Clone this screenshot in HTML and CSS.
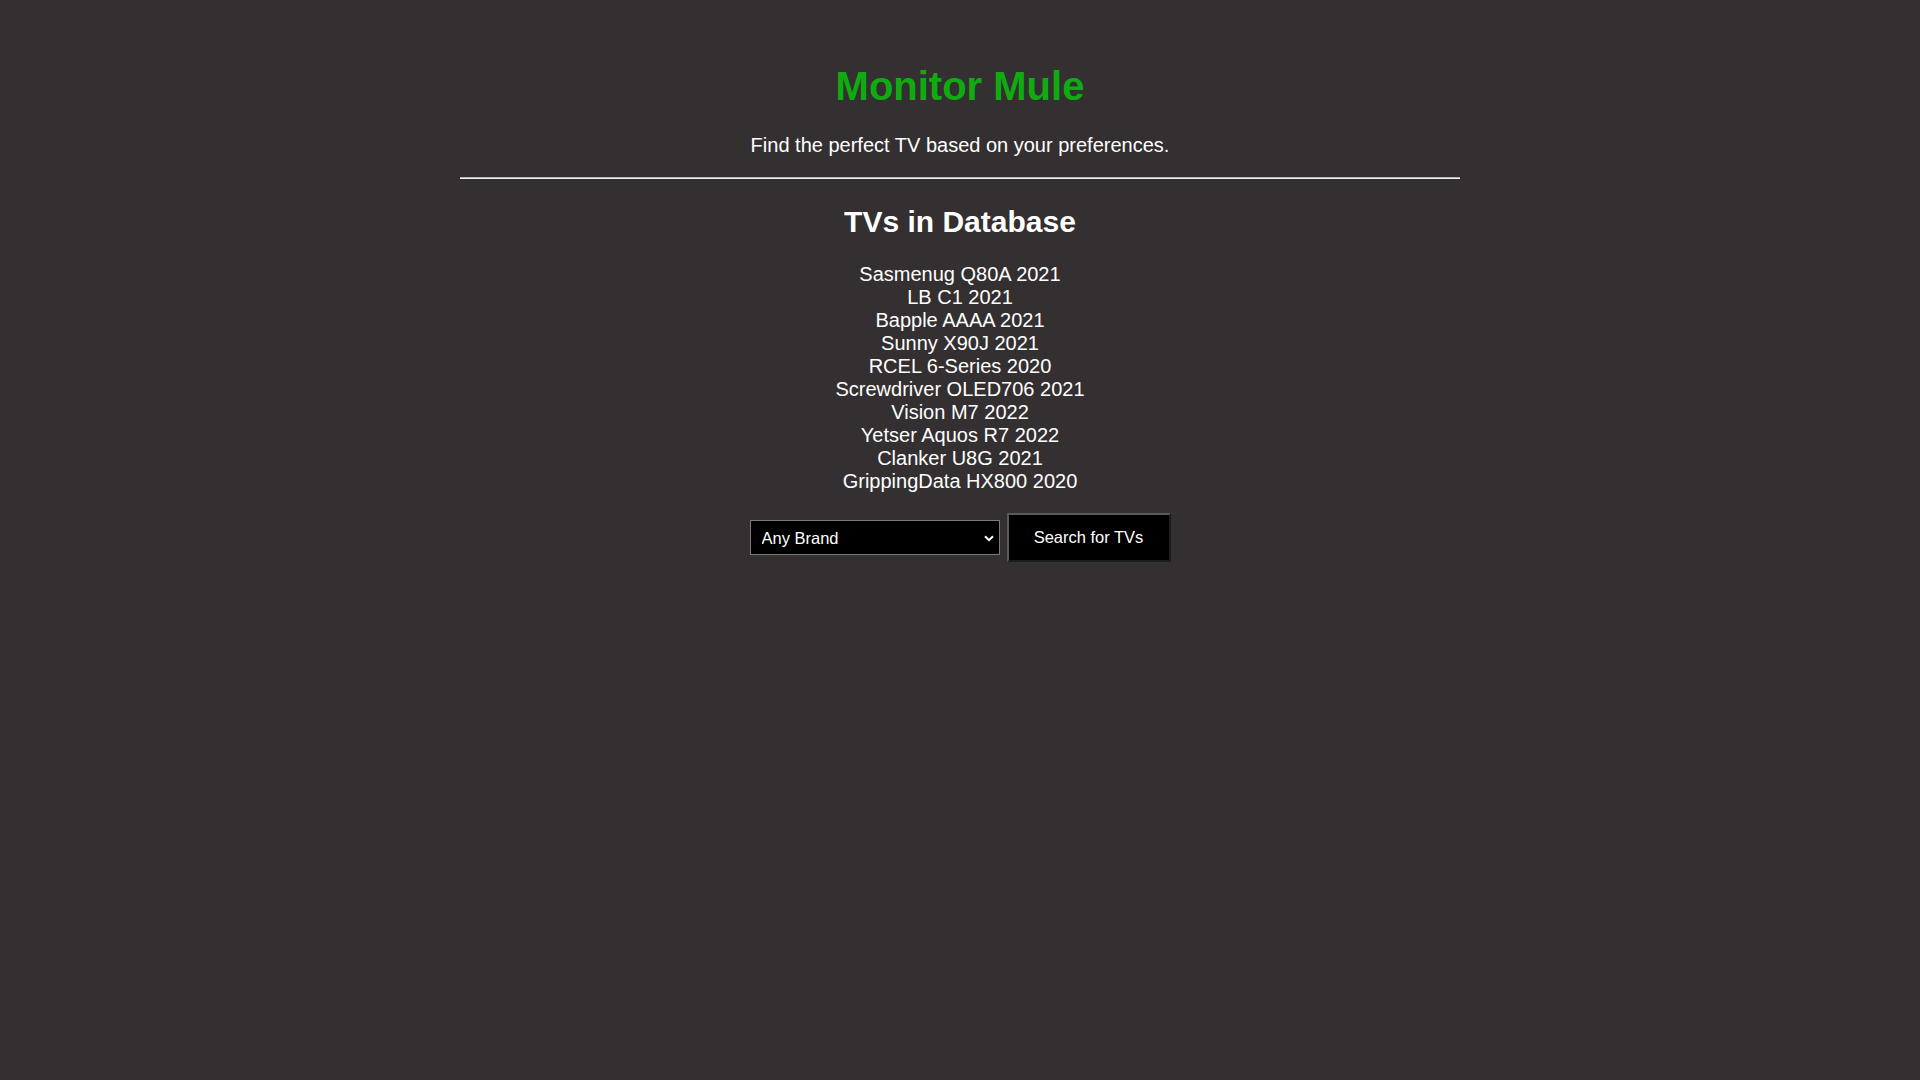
FILE: index.html
```html
<!DOCTYPE html>
<html lang="en">
<head>
    <meta charset="UTF-8">
    <meta name="viewport" content="width=device-width, initial-scale=1.0">
    <title>Monitor Mule</title>
    <link rel="stylesheet" href="styles.css">
</head>
<body>

    <div class="page">
        <!-- Header -->
        <h1 class="site-title">Monitor Mule</h1>
        <p class="tagline">Find the perfect TV based on your preferences.</p>
        <hr class="divider">

        <!-- TV list -->
        <h2 class="section-title">TVs in Database</h2>
        <div class="tv-list">
            <div class="tv-item">Sasmenug Q80A 2021</div>
            <div class="tv-item">LB C1 2021</div>
            <div class="tv-item">Bapple AAAA 2021</div>
            <div class="tv-item">Sunny X90J 2021</div>
            <div class="tv-item">RCEL 6-Series 2020</div>
            <div class="tv-item">Screwdriver OLED706 2021</div>
            <div class="tv-item">Vision M7 2022</div>
            <div class="tv-item">Yetser Aquos R7 2022</div>
            <div class="tv-item">Clanker U8G 2021</div>
            <div class="tv-item">GrippingData HX800 2020</div>
        </div>

        <!-- Search controls -->
        <form class="search-form">
            <div class="select-wrap">
                <select class="brand-select" id="brand">
                    <option value="" selected>Any Brand</option>
                    <option value="Sasmenug">Sasmenug</option>
                    <option value="LB">LB</option>
                    <option value="Bapple">Bapple</option>
                    <option value="Sunny">Sunny</option>
                    <option value="RCEL">RCEL</option>
                    <option value="Screwdriver">Screwdriver</option>
                    <option value="Vision">Vision</option>
                    <option value="Yetser">Yetser</option>
                    <option value="Clanker">Clanker</option>
                    <option value="GrippingData">GrippingData</option>
                </select>
                <svg class="select-arrow" width="10" height="7" viewBox="0 0 10 7">
                    <path d="M1 1.2 L5 5.2 L9 1.2" fill="none" stroke="#fff" stroke-width="2"/>
                </svg>
            </div>
            <button type="submit" class="search-btn">Search for TVs</button>
        </form>
    </div>

</body>
</html>
```

FILE: styles.css
```css
body {
    font-family: Arial, "Liberation Sans", sans-serif;
    font-size: 20px;
    background-color: #342f30;
    color: #fff;
    margin: 0;
    padding: 0;
}
.page {
    width: 1000px;
    margin: 0 auto;
    padding-top: 64px;
    text-align: center;
}
/* Header */
.site-title {
    font-size: 40px;
    color: #10ab10;
    margin: 0 0 25px;
}
.tagline {
    margin: 0 0 20px;
}
.divider {
    width: 1000px;
    height: 0;
    margin: 0 0 26px;
    border: none;
    border-top: 1px solid #b4b4b4;
    border-bottom: 1px solid #f2f2f2;
}
/* List */
.section-title {
    font-size: 30px;
    margin: 0 0 24px;
}
.tv-list {
    margin-bottom: 20px;
}
/* Search */
.search-form {
    display: flex;
    justify-content: center;
    align-items: center;
    gap: 7px;
}
.select-wrap {
    position: relative;
}
.brand-select {
    appearance: none;
    -webkit-appearance: none;
    width: 250px;
    height: 35px;
    box-sizing: border-box;
    padding: 0 30px 0 11px;
    background-color: #000;
    color: #fff;
    border: 1px solid #7a7a7a;
    border-radius: 0;
    font-family: Arial, "Liberation Sans", sans-serif;
    font-size: 16.5px;
    outline: none;
}
.select-arrow {
    position: absolute;
    right: 6px;
    top: 15px;
    pointer-events: none;
}
.search-btn {
    width: 164px;
    height: 49px;
    box-sizing: border-box;
    background-color: #000;
    color: #fff;
    border: 2px solid;
    border-color: #5a5a5a #1c1c1c #1c1c1c #5a5a5a;
    font-family: Arial, "Liberation Sans", sans-serif;
    font-size: 16.5px;
    cursor: pointer;
}
```
